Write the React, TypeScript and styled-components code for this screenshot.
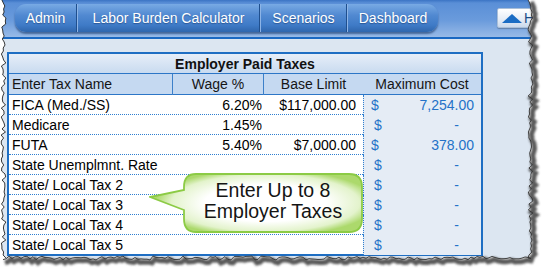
import React from "react";
import styled, { createGlobalStyle } from "styled-components";

const Global = createGlobalStyle`
  *, *::before, *::after { box-sizing: border-box; }
  html, body { margin: 0; padding: 0; background: #ffffff; }
  body { font-family: "Liberation Sans", Arial, sans-serif; }
`;

const Page = styled.div`
  position: relative;
  width: 542px;
  height: 272px;
  overflow: hidden;
  background: #ffffff;
`;

const Sheet = styled.div`
  width: 542px;
  height: 262px;
  background: #dce6f1;
  display: flex;
  flex-direction: column;
`;

const TopBar = styled.div`
  height: 39px;
  flex: none;
  display: flex;
  align-items: flex-start;
  padding: 4px 0 0 15px;
  border-bottom: 2px solid #1a68c2;
  background: linear-gradient(
    to bottom,
    #3b74c4 0px,
    #5a8fd7 3px,
    #6a9bdc 55%,
    #98bae7 100%
  );
`;

const TabGroup = styled.div`
  display: flex;
  height: 28px;
  border-radius: 11px;
  box-shadow: 0 2px 2px rgba(10, 40, 90, 0.55);
`;

const Tab = styled.div<{ $w: number; $first?: boolean; $last?: boolean }>`
  width: ${(p) => p.$w}px;
  height: 28px;
  display: flex;
  align-items: center;
  justify-content: center;
  color: #ffffff;
  font-size: 14px;
  text-shadow: 0 1px 1px rgba(0, 20, 60, 0.35);
  background: linear-gradient(
    to bottom,
    #78aae4 0%,
    #5189d1 40%,
    #3f7bc7 75%,
    #2f66ad 100%
  );
  border-left: ${(p) => (p.$first ? "none" : "1px solid #8db4e6")};
  border-right: ${(p) => (p.$last ? "none" : "1px solid #1f4f8e")};
  border-radius: ${(p) =>
    p.$first ? "11px 0 0 11px" : p.$last ? "0 11px 11px 0" : "0"};
`;

const HomeButton = styled.div`
  margin: 4px 0 0 59px;
  width: 45px;
  height: 20px;
  display: flex;
  align-items: center;
  padding-left: 4px;
  gap: 2px;
  border: 1px solid #a9bed8;
  border-radius: 2px;
  background: linear-gradient(to bottom, #ffffff, #e4ecf6 60%, #cbd9ec);
  box-shadow: 0 1px 1px rgba(0, 0, 0, 0.25);
  color: #1b4b86;
  font-size: 14px;
`;

const UpTriangle = styled.span`
  width: 0;
  height: 0;
  border-left: 10px solid transparent;
  border-right: 10px solid transparent;
  border-bottom: 9px solid #1a6cc4;
`;

const Band = styled.div`
  height: 13px;
  flex: none;
`;

const TableWrap = styled.div`
  position: relative;
  margin-left: 7px;
  width: 476px;
  border: 2px solid #1e6ec3;
  background: #ffffff;
`;

const TitleRow = styled.div`
  height: 20px;
  border-bottom: 1px solid #2c76c7;
  background: linear-gradient(to bottom, #e6eef8, #c9dbf0);
  text-align: center;
  font-weight: bold;
  font-size: 14px;
  line-height: 20px;
  color: #111111;
`;

const COLS = "164px 91px 99px 118px";

const HeaderRow = styled.div`
  display: grid;
  grid-template-columns: ${COLS};
  height: 21px;
  background: #c5d9f1;
  border-bottom: 1px solid #2c76c7;
  font-size: 14px;
  line-height: 21px;
  color: #151515;
`;

const HeaderCell = styled.div<{ $align: "left" | "center"; $sep?: boolean }>`
  text-align: ${(p) => p.$align};
  padding-left: ${(p) => (p.$align === "left" ? "3px" : "0")};
  border-right: ${(p) => (p.$sep ? "1px solid #3d80c9" : "none")};
  white-space: nowrap;
`;

const DataRow = styled.div<{ $last?: boolean }>`
  display: grid;
  grid-template-columns: ${COLS};
  height: ${(p) => (p.$last ? 19 : 20)}px;
  border-bottom: ${(p) => (p.$last ? "none" : "1px dotted #2f7fd0")};
  font-size: 14px;
  line-height: 19px;
  color: #000000;
`;

const NameCell = styled.div`
  padding: 1px 0 0 3px;
  white-space: nowrap;
`;

const NumCell = styled.div<{ $pr: number }>`
  padding: 1px ${(p) => p.$pr}px 0 0;
  text-align: right;
  white-space: nowrap;
`;

const MaxCell = styled.div<{ $dash?: boolean }>`
  display: flex;
  justify-content: space-between;
  padding: 1px ${(p) => (p.$dash ? 22 : 7)}px 0 ${(p) => (p.$dash ? 10 : 7)}px;
  background: #e5ecf5;
  border-left: 1px dotted #2f7fd0;
  color: #2472c8;
  white-space: nowrap;
`;

const Callout = styled.div`
  position: absolute;
  left: 140px;
  top: 119px;
  width: 214px;
  height: 60px;
`;

const CalloutText = styled.div`
  position: absolute;
  left: 34px;
  top: 0;
  width: 180px;
  height: 59px;
  display: flex;
  flex-direction: column;
  justify-content: center;
  align-items: center;
  font-family: "Liberation Sans", Arial, sans-serif;
  font-size: 19.5px;
  line-height: 21px;
  color: #141414;
  padding-bottom: 3px;
`;

const Overlay = styled.svg`
  position: absolute;
  left: 0;
  top: 0;
  pointer-events: none;
`;

type Row = {
  name: string;
  wage?: string;
  base?: string;
  max?: string;
};

const rows: Row[] = [
  { name: "FICA (Med./SS)", wage: "6.20%", base: "$117,000.00", max: "7,254.00" },
  { name: "Medicare", wage: "1.45%" },
  { name: "FUTA", wage: "5.40%", base: "$7,000.00", max: "378.00" },
  { name: "State Unemplmnt. Rate" },
  { name: "State/ Local Tax 2" },
  { name: "State/ Local Tax 3" },
  { name: "State/ Local Tax 4" },
  { name: "State/ Local Tax 5" },
];

const tabs = [
  { label: "Admin", w: 62 },
  { label: "Labor Burden Calculator", w: 183 },
  { label: "Scenarios", w: 87 },
  { label: "Dashboard", w: 91 },
];

const rnd = (i: number, s: number) => {
  const v = Math.sin(i * 12.9898 + s * 78.233) * 43758.5453;
  return v - Math.floor(v);
};

function TornEdges() {
  const left: [number, number][] = [];
  const right: [number, number][] = [];
  const bottom: [number, number][] = [];
  for (let y = 0; y <= 258; y += 3) left.push([1 + rnd(y, 1) * 5, y]);
  for (let y = 0; y <= 258; y += 3) right.push([528 + rnd(y, 2) * 5, y]);
  for (let x = 531; x >= 3; x -= 3) bottom.push([x, 256 + rnd(x, 3) * 4]);
  const pts = [...right, ...bottom, ...left.slice().reverse()];
  const poly = pts.map((p) => `${p[0].toFixed(1)},${p[1].toFixed(1)}`).join(" ");
  const outside = `M0,0 H542 V272 H0 Z M${left[0][0]},0 L${poly} Z`;
  const shadowPts = [
    ...right.map((p) => [p[0] + 3, p[1] + 2]),
    ...bottom.map((p) => [p[0] + 2, p[1] + 3]),
  ]
    .map((p) => `${p[0].toFixed(1)},${p[1].toFixed(1)}`)
    .join(" ");
  const edgeRB = [...right, ...bottom]
    .map((p) => `${p[0].toFixed(1)},${p[1].toFixed(1)}`)
    .join(" ");
  const edgeL = left.map((p) => `${p[0].toFixed(1)},${p[1].toFixed(1)}`).join(" ");
  return (
    <Overlay width={542} height={272} viewBox="0 0 542 272">
      <defs>
        <filter id="blur" x="-10%" y="-10%" width="120%" height="120%">
          <feGaussianBlur stdDeviation="1.3" />
        </filter>
      </defs>
      <path d={outside} fill="#ffffff" fillRule="evenodd" />
      <polyline
        points={shadowPts}
        fill="none"
        stroke="rgba(60,60,60,0.85)"
        strokeWidth={5}
        filter="url(#blur)"
      />
      <polyline points={edgeRB} fill="none" stroke="#333333" strokeWidth={0.9} />
      <polyline points={edgeL} fill="none" stroke="#222222" strokeWidth={0.9} />
    </Overlay>
  );
}

function Bubble() {
  return (
    <svg width={214} height={60} viewBox="0 0 214 60">
      <defs>
        <radialGradient id="bg" cx="55%" cy="50%" r="58%" gradientTransform="translate(0.05 0) scale(0.9 1)">
          <stop offset="0%" stopColor="#ffffff" />
          <stop offset="55%" stopColor="#ffffff" />
          <stop offset="85%" stopColor="#e3f3cc" />
          <stop offset="100%" stopColor="#acd96c" />
        </radialGradient>
      </defs>
      <path
        d="M47 1 H200 Q213 1 213 14 V46 Q213 59 200 59 H47 Q35 59 35 46 V37 L1 24 L35 17 V14 Q35 1 47 1 Z"
        fill="url(#bg)"
        stroke="#8ccb45"
        strokeWidth={1.8}
      />
    </svg>
  );
}

export default function App() {
  return (
    <>
      <Global />
      <Page>
        <Sheet>
          <TopBar>
            <TabGroup>
              {tabs.map((t, i) => (
                <Tab key={t.label} $w={t.w} $first={i === 0} $last={i === tabs.length - 1}>
                  {t.label}
                </Tab>
              ))}
            </TabGroup>
            <HomeButton>
              <UpTriangle />H
            </HomeButton>
          </TopBar>
          <Band />
          <TableWrap>
            <TitleRow>Employer Paid Taxes</TitleRow>
            <HeaderRow>
              <HeaderCell $align="left" $sep>
                Enter Tax Name
              </HeaderCell>
              <HeaderCell $align="center" $sep>
                Wage %
              </HeaderCell>
              <HeaderCell $align="center">Base Limit</HeaderCell>
              <HeaderCell $align="center">Maximum Cost</HeaderCell>
            </HeaderRow>
            {rows.map((r, i) => (
              <DataRow key={r.name} $last={i === rows.length - 1}>
                <NameCell>{r.name}</NameCell>
                <NumCell $pr={2}>{r.wage ?? ""}</NumCell>
                <NumCell $pr={7}>{r.base ?? ""}</NumCell>
                <MaxCell $dash={!r.max}>
                  <span>$</span>
                  <span>{r.max ?? "-"}</span>
                </MaxCell>
              </DataRow>
            ))}
            <Callout>
              <Bubble />
              <CalloutText>
                <span>Enter Up to 8</span>
                <span>Employer Taxes</span>
              </CalloutText>
            </Callout>
          </TableWrap>
        </Sheet>
        <TornEdges />
      </Page>
    </>
  );
}
